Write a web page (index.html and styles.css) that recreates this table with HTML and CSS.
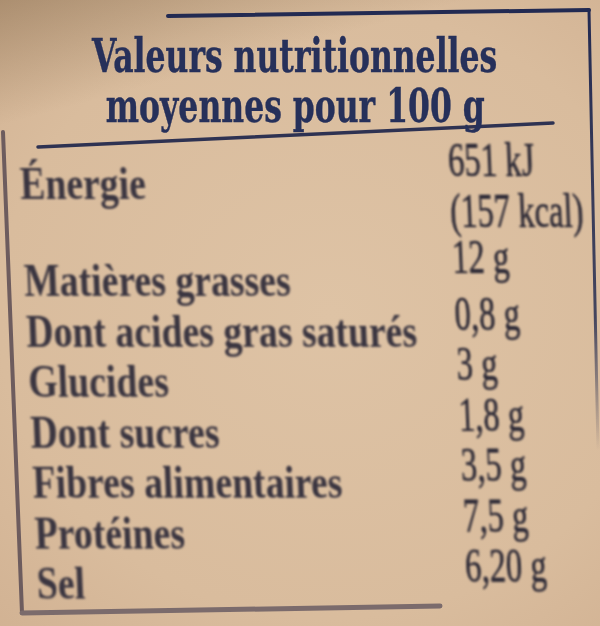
FILE: index.html
```html
<!DOCTYPE html>
<html lang="fr">
<head>
<meta charset="utf-8">
<title>Valeurs nutritionnelles</title>
<link rel="stylesheet" href="styles.css">
</head>
<body>
<main class="label">
  <svg class="frame" width="600" height="626" viewBox="0 0 600 626" aria-hidden="true">
    <defs>
      <linearGradient id="fade" gradientUnits="userSpaceOnUse" x1="0" y1="10" x2="0" y2="450">
        <stop offset="0" stop-color="#222a52" stop-opacity="1"/>
        <stop offset="0.7" stop-color="#2a3052" stop-opacity="0.85"/>
        <stop offset="1" stop-color="#2a3052" stop-opacity="0"/>
      </linearGradient>
    </defs>
    <path class="line-top" d="M168 16 L589 10"/>
    <path class="line-right" d="M589 10 L598 450"/>
    <path class="line-divider" d="M38 147 L553 123"/>
    <path class="line-left" d="M3 132 L22 613"/>
    <path class="line-bottom" d="M22 613 L440 606"/>
  </svg>

  <h1 class="title">
    <span class="title-line">Valeurs nutritionnelles</span>
    <span class="title-line">moyennes pour 100 g</span>
  </h1>

  <div class="table">
    <div class="row row-energy">
      <span class="name">Énergie</span>
      <span class="val"><span class="v">651 kJ</span><span class="v">(157 kcal)</span></span>
    </div>
    <div class="row row-fat">
      <span class="name">Matières grasses</span>
      <span class="val"><span class="v">12 g</span></span>
    </div>
    <div class="row">
      <span class="name">Dont acides gras saturés</span>
      <span class="val"><span class="v">0,8 g</span></span>
    </div>
    <div class="row">
      <span class="name">Glucides</span>
      <span class="val"><span class="v">3 g</span></span>
    </div>
    <div class="row">
      <span class="name">Dont sucres</span>
      <span class="val"><span class="v">1,8 g</span></span>
    </div>
    <div class="row">
      <span class="name">Fibres alimentaires</span>
      <span class="val"><span class="v">3,5 g</span></span>
    </div>
    <div class="row">
      <span class="name">Protéines</span>
      <span class="val"><span class="v">7,5 g</span></span>
    </div>
    <div class="row">
      <span class="name">Sel</span>
      <span class="val"><span class="v">6,20 g</span></span>
    </div>
  </div>
</main>
</body>
</html>
```

FILE: styles.css
```css
html, body {
  margin: 0;
  padding: 0;
}

body {
  width: 600px;
  height: 626px;
  overflow: hidden;
  background:
    linear-gradient(165deg, rgba(110, 85, 55, 0.38) 0%, rgba(110, 85, 55, 0) 16%),
    radial-gradient(ellipse 85% 75% at 55% 50%, #dec3a5 0%, #d9bc9d 65%, #d0b091 100%);
}

.label {
  position: relative;
  width: 600px;
  height: 626px;
  box-sizing: border-box;
  padding-top: 31px;
  overflow: hidden;
}

.frame {
  position: absolute;
  left: 0;
  top: 0;
  pointer-events: none;
  filter: blur(0.5px);
}

.frame path {
  fill: none;
  stroke-linecap: round;
}

.line-top {
  stroke: #222a52;
  stroke-width: 4;
}

.line-right {
  stroke: url(#fade);
  stroke-width: 3;
}

.line-divider {
  stroke: #2e3252;
  stroke-width: 3.5;
}

.line-left {
  stroke: #6d5c5e;
  stroke-width: 4;
}

.line-bottom {
  stroke: #7b6b6c;
  stroke-width: 5;
}

.title {
  width: 570px;
  margin: 0 0 0 10px;
  display: flex;
  flex-direction: column;
  align-items: center;
  font-family: "DejaVu Serif", serif;
  font-stretch: condensed;
  font-weight: bold;
  font-size: 46px;
  line-height: 50px;
  color: #26305a;
  -webkit-text-stroke: 0.4px #26305a;
  filter: blur(0.6px);
}

.title-line {
  display: block;
  white-space: nowrap;
  transform: scaleX(0.76);
}

.table {
  width: 560px;
  margin-top: 28px;
  padding-left: 19px;
  box-sizing: border-box;
  transform: skewX(2.4deg);
  transform-origin: 0 0;
  filter: blur(0.85px);
}

.row {
  display: grid;
  grid-template-columns: 429px 100px;
  align-items: start;
}

.name {
  display: block;
  white-space: nowrap;
  font-family: "Liberation Serif", "Times New Roman", serif;
  font-weight: bold;
  font-size: 46px;
  line-height: 50.5px;
  color: #3a3540;
  transform: scaleX(0.82);
  transform-origin: 0 50%;
}

.val {
  display: flex;
  flex-direction: column;
  width: 100px;
  margin-top: -18px;
}

.v {
  display: block;
  width: 100px;
  white-space: nowrap;
  font-family: "Liberation Serif", "Times New Roman", serif;
  font-size: 48px;
  line-height: 50.5px;
  color: #2d2a36;
  -webkit-text-stroke: 0.6px #2d2a36;
  transform: scaleX(0.68);
  transform-origin: 0 50%;
}

.row-energy {
  margin-bottom: 20px;
}

.row-energy .val {
  margin-top: -24px;
}

.row-fat .val {
  margin-top: -24px;
}
```
